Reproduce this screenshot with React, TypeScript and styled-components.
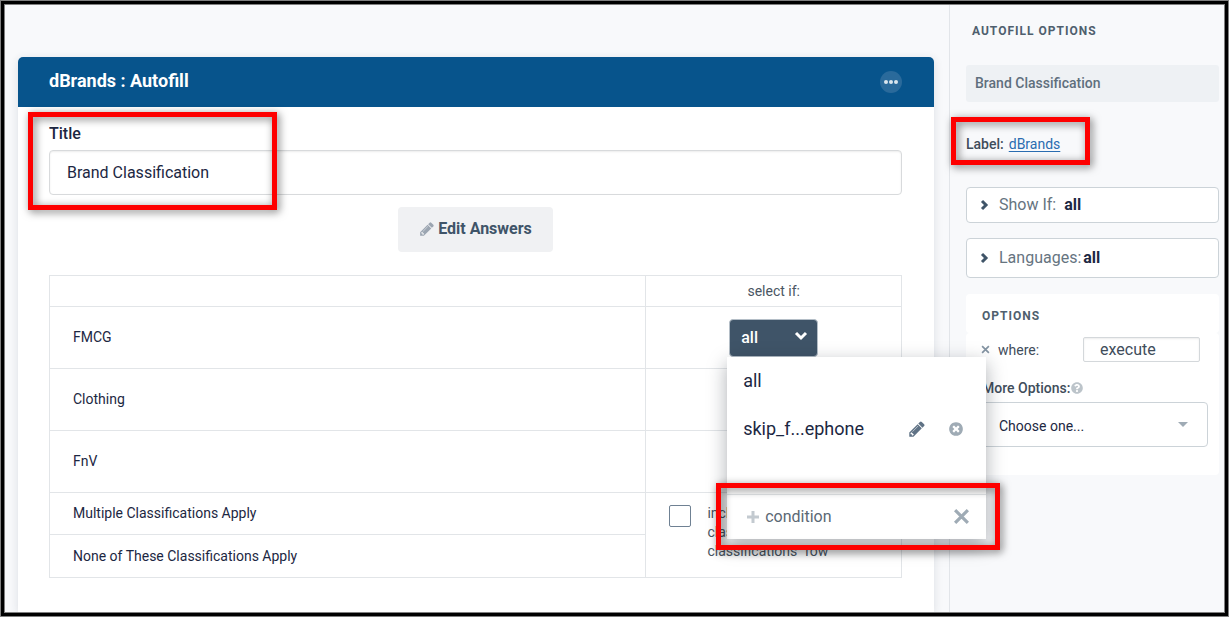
import React from "react";
import styled, { createGlobalStyle, css } from "styled-components";
import { FaQuestionCircle } from "react-icons/fa";

const GlobalStyle = createGlobalStyle`
  *, *::before, *::after { box-sizing: border-box; }
  body {
    margin: 0;
    font-family: Roboto, "Liberation Sans", sans-serif;
    font-size: 14px;
    line-height: 20px;
    color: #1c2742;
    background: #f8f9fb;
  }
  button, input, select { font: inherit; color: inherit; }
  button { cursor: pointer; }
`;

const Frame = styled.div`
  display: flex;
  min-height: 100vh;
  border: 1px solid #808080;
`;

const FrameLine = styled.div`
  flex: 1;
  display: flex;
  border: 3px solid #000;
`;

const Page = styled.div`
  flex: 1;
  display: grid;
  grid-template-columns: minmax(0, 1fr) 275px;
  border: 1px solid #808080;
  overflow: hidden;
`;

const Main = styled.main`
  position: relative;
  z-index: 1;
  display: flex;
  padding: 52px 15px 0 13px;
`;

const Card = styled.section`
  flex: 1;
  min-width: 0;
  border-radius: 5px 5px 0 0;
  background: #fff;
  box-shadow: 0 2px 10px rgba(40, 60, 80, 0.14);
`;

const CardHeader = styled.header`
  display: flex;
  align-items: center;
  justify-content: space-between;
  height: 50px;
  padding: 0 32px 0 31px;
  border-radius: 5px 5px 0 0;
  background: #07548c;
  color: #fff;
`;

const CardTitle = styled.h1`
  margin: 0;
  padding-bottom: 2px;
  font-size: 18px;
  line-height: 24px;
  font-weight: 700;
`;

const MoreButton = styled.button`
  display: flex;
  align-items: center;
  justify-content: center;
  width: 22px;
  height: 22px;
  padding: 0;
  border: 0;
  border-radius: 50%;
  background: #2a6a9b;
  color: #dbe6ee;
`;

const CardBody = styled.div`
  padding: 17px 32px 0 31px;
`;

const Highlight = styled.div<{ $inset: string }>`
  position: absolute;
  inset: ${(p) => p.$inset};
  z-index: 3;
  border: 5px solid #fe0000;
  filter: drop-shadow(2px 2px 4px rgba(0, 0, 0, 0.55));
  pointer-events: none;
`;

const Field = styled.div`
  position: relative;
  display: flex;
  flex-direction: column;
  gap: 6px;
`;

const FieldMark = styled(Highlight)`
  width: 249px;
`;

const FieldLabel = styled.label`
  font-size: 16px;
  font-weight: 500;
`;

const TitleInput = styled.input`
  width: 100%;
  height: 45px;
  padding: 0 17px;
  border: 1px solid #d8dadc;
  border-radius: 4px;
  background: #fff;
  box-shadow: inset 0 1px 2px rgba(0, 0, 0, 0.08);
  font-size: 16px;
`;

const EditButton = styled.button`
  display: flex;
  align-items: center;
  justify-content: center;
  gap: 3px;
  width: 155px;
  height: 45px;
  margin: 12px auto 23px;
  padding: 0 0 2px;
  border: 0;
  border-radius: 4px;
  background: #f0f1f3;
  color: #3f5468;
  font-size: 16px;
  font-weight: 700;

  svg { color: #9ba5b1; }
`;

const AnswerTable = styled.table`
  width: 100%;
  border-collapse: collapse;
  table-layout: fixed;
`;

const Cell = styled.td`
  height: 62px;
  padding: 0 23px 2px;
  border: 1px solid #e2e5e8;
`;

const SlimCell = styled(Cell)`
  height: 42px;
`;

const LastCell = styled(Cell)`
  height: 43px;
  padding-bottom: 0;
`;

const DropCell = styled(Cell)`
  padding: 0;
`;

const HeadCell = styled.th<{ $width?: string }>`
  width: ${(p) => p.$width ?? "auto"};
  height: 31px;
  padding: 0;
  border: 1px solid #e2e5e8;
  color: #4a5663;
  font-weight: 400;
`;

const DropHolder = styled.div`
  position: relative;
  width: 89px;
  margin: 0 auto;
`;

const DropButton = styled.button`
  display: flex;
  align-items: center;
  justify-content: space-between;
  width: 100%;
  height: 38px;
  padding: 0 9px 0 11px;
  border: 1px solid #b4bec7;
  border-radius: 4px;
  background: #3f5468;
  color: #fff;
  font-size: 16px;
  font-weight: 500;

  svg { margin-bottom: 4px; }
`;

const Menu = styled.div`
  position: absolute;
  top: 38px;
  left: -2px;
  z-index: 2;
  width: 259px;
  background: #fff;
  box-shadow: 0 6px 18px rgba(20, 30, 40, 0.35);
  font-size: 18px;
`;

const MenuRow = styled.div`
  display: flex;
  align-items: center;
  height: 48px;
  padding: 0 22px 0 16px;
`;

const MenuFooter = styled(MenuRow)`
  position: relative;
  height: 45px;
  margin-top: 41px;
  padding: 0 16px 0 20px;
  border-top: 1px solid #e2e5e8;
  color: #5b6874;
`;

const PlainButton = styled.button<{ $push?: boolean; $color?: string }>`
  display: flex;
  align-items: center;
  gap: 6px;
  padding: 0;
  border: 0;
  background: none;
  color: ${(p) => p.$color ?? "inherit"};
  ${(p) => p.$push && css`margin-left: auto;`}
`;

const ConditionButton = styled(PlainButton)`
  font-size: 16px;

  svg { color: #c3cad0; }
`;

const RowTools = styled.div`
  display: flex;
  align-items: center;
  gap: 22px;
  margin-left: auto;
`;

const IncludeLabel = styled.label`
  display: flex;
  gap: 16px;
  height: 61px;
  color: #4a5663;
  line-height: 19px;
`;

const IncludeText = styled.span`
  white-space: pre-line;
`;

const CheckBox = styled.input`
  appearance: none;
  flex: none;
  width: 22px;
  height: 22px;
  margin: 1px 0 0;
  border: 1px solid #6f8193;
  border-radius: 2px;
  background: #fff;
`;

const Aside = styled.aside`
  padding: 16px 5px 0 16px;
  border-left: 1px solid #e2e5e9;
  background: #f8f9fb;
`;

const AsideTop = styled.div`
  padding-left: 6px;
`;

const SideHeading = styled.h2`
  margin: 0;
  font-size: 12px;
  line-height: 20px;
  font-weight: 700;
  letter-spacing: 1px;
  color: #4f5f6e;
`;

const NameBox = styled.div`
  margin-top: 24px;
  padding: 8px 9px 9px;
  border-radius: 3px;
  background: #eef1f4;
  color: #5f6f7d;
  font-weight: 500;
`;

const LabelLine = styled.div`
  position: relative;
  margin: 32px 0 33px;
  color: #3f4d5b;
  font-weight: 500;

  a {
    margin-left: 5px;
    color: #2a6cb0;
    font-weight: 400;
    text-underline-offset: 2px;
  }
`;

const LabelMark = styled(Highlight)`
  width: 139px;
`;

const Accordion = styled.button<{ $height: number; $gap: number }>`
  display: flex;
  align-items: center;
  width: 100%;
  height: ${(p) => p.$height}px;
  margin-bottom: 15px;
  padding: 0 11px;
  border: 1px solid #ccd3d8;
  border-radius: 4px;
  background: #fff;
  color: #66747f;
  font-size: 16px;

  svg { margin-right: 7px; color: #3f5468; }
  strong { margin-left: ${(p) => p.$gap}px; color: #1c2742; }
`;

const OptionsPanel = styled.section`
  padding-top: 1px;
`;

const OptionsHead = styled.div`
  padding: 12px 16px 7px;
  border-radius: 4px;
  background: #fff;
`;

const OptionsBody = styled.div`
  padding: 4px 11px 28px;
  border-radius: 4px;
  background: #fff;
  color: #3f4d5b;
`;

const OptionRow = styled.div`
  display: flex;
  align-items: center;
  padding: 0 8px 0 4px;
`;

const WhereLabel = styled.label`
  margin-left: 8px;
`;

const WhereInput = styled.input`
  width: 117px;
  height: 25px;
  margin-left: auto;
  padding: 0 16px;
  border: 1px solid #d4d8db;
  border-radius: 2px;
  background: #fff;
  box-shadow: inset 0 1px 2px rgba(0, 0, 0, 0.08);
  font-size: 16px;
`;

const MoreOptions = styled.div`
  display: flex;
  align-items: center;
  gap: 1px;
  margin: 16px 0 4px;
  padding-left: 5px;
  font-weight: 500;

  svg { color: #bcc4ca; }
`;

const SelectWrap = styled.div`
  position: relative;
  display: flex;
  align-items: center;

  svg {
    position: absolute;
    right: 20px;
    color: #9fabb5;
    pointer-events: none;
  }
`;

const ChooseSelect = styled.select`
  appearance: none;
  width: 100%;
  height: 45px;
  padding: 2px 21px 0;
  border: 1px solid #ccd3d8;
  border-radius: 4px;
  background: #fff;
  color: #1c2742;
`;

const Pencil = ({ size }: { size: number }) => (
  <svg width={size} height={size} viewBox="0 0 1792 1792" fill="currentColor" aria-hidden="true">
    <path d="M491 1536l91-91-235-235-91 91v107h128v128h107zm523-928q0-22-22-22-10 0-17 7l-542 542q-7 7-7 17 0 22 22 22 10 0 17-7l542-542q7-7 7-17zm-54-192l416 416-832 832h-416v-416l832-832zm683 96q0 53-37 90l-166 166-416-416 166-165q36-38 90-38 53 0 91 38l235 234q37 39 37 91z" />
  </svg>
);

const TimesCircle = () => (
  <svg width="16" height="16" viewBox="0 0 1792 1792" fill="currentColor" aria-hidden="true">
    <path d="M1277 1122q0-26-19-45l-181-181 181-181q19-19 19-45 0-27-19-46l-90-90q-19-19-46-19-26 0-45 19l-181 181-181-181q-19-19-45-19-27 0-46 19l-90 90q-19 19-19 46 0 26 19 45l181 181-181 181q-19 19-19 45 0 27 19 46l90 90q19 19 46 19 26 0 45-19l181-181 181 181q19 19 45 19 27 0 46-19l90-90q19-19 19-46zm387-226q0 209-103 385.5t-279.5 279.5-385.5 103-385.5-103-279.5-279.5-103-385.5 103-385.5 279.5-279.5 385.5-103 385.5 103 279.5 279.5 103 385.5z" />
  </svg>
);

const Cross = ({ size, weight }: { size: number; weight: number }) => (
  <svg width={size} height={size} viewBox="0 0 16 16" fill="none" stroke="currentColor" strokeWidth={weight} aria-hidden="true">
    <path d="M2 2l12 12M14 2L2 14" />
  </svg>
);

const Chevron = ({ down }: { down?: boolean }) => (
  <svg width="14" height="14" viewBox="0 0 14 14" fill="none" stroke="currentColor" strokeWidth="3" aria-hidden="true">
    <path d={down ? "M2 4l5 5 5-5" : "M4 3l4 4-4 4"} />
  </svg>
);

export default function App() {
  return (
    <>
      <GlobalStyle />
      <Frame>
        <FrameLine>
          <Page>
            <Main>
              <Card>
                <CardHeader>
                  <CardTitle>dBrands : Autofill</CardTitle>
                  <MoreButton type="button" aria-label="More">
                    <svg width="14" height="4" viewBox="0 0 14 4" fill="currentColor" aria-hidden="true">
                      <circle cx="2" cy="2" r="2" />
                      <circle cx="7" cy="2" r="2" />
                      <circle cx="12" cy="2" r="2" />
                    </svg>
                  </MoreButton>
                </CardHeader>
                <CardBody>
                  <Field>
                    <FieldLabel htmlFor="title">Title</FieldLabel>
                    <TitleInput id="title" defaultValue="Brand Classification" />
                    <FieldMark $inset="-12px auto -15px -21px" />
                  </Field>
                  <EditButton type="button">
                    <Pencil size={16} />
                    Edit Answers
                  </EditButton>
                  <AnswerTable>
                    <thead>
                      <tr>
                        <HeadCell />
                        <HeadCell $width="30%">select if:</HeadCell>
                      </tr>
                    </thead>
                    <tbody>
                      <tr>
                        <Cell>FMCG</Cell>
                        <DropCell>
                          <DropHolder>
                            <DropButton type="button" aria-haspopup="true" aria-expanded="true">
                              all
                              <Chevron down />
                            </DropButton>
                            <Menu>
                              <MenuRow>
                                <PlainButton type="button">all</PlainButton>
                              </MenuRow>
                              <MenuRow>
                                <PlainButton type="button">skip_f...ephone</PlainButton>
                                <RowTools>
                                  <PlainButton type="button" $color="#5f7285" aria-label="Edit">
                                    <Pencil size={18} />
                                  </PlainButton>
                                  <PlainButton type="button" $color="#9fabb5" aria-label="Remove">
                                    <TimesCircle />
                                  </PlainButton>
                                </RowTools>
                              </MenuRow>
                              <MenuFooter>
                                <ConditionButton type="button">
                                  <svg width="12" height="12" viewBox="0 0 12 12" stroke="currentColor" strokeWidth="3" aria-hidden="true">
                                    <path d="M6 0v12M0 6h12" />
                                  </svg>
                                  condition
                                </ConditionButton>
                                <PlainButton type="button" $push $color="#9fabb5" aria-label="Close">
                                  <Cross size={17} weight={3} />
                                </PlainButton>
                                <Highlight $inset="-12px -14px -11px -11px" />
                              </MenuFooter>
                            </Menu>
                          </DropHolder>
                        </DropCell>
                      </tr>
                      <tr>
                        <Cell>Clothing</Cell>
                        <Cell />
                      </tr>
                      <tr>
                        <Cell>FnV</Cell>
                        <Cell />
                      </tr>
                      <tr>
                        <SlimCell>Multiple Classifications Apply</SlimCell>
                        <SlimCell rowSpan={2}>
                          <IncludeLabel>
                            <CheckBox type="checkbox" />
                            <IncludeText>
                              {'include "multiple\nclassifications" and "no\nclassifications" row'}
                            </IncludeText>
                          </IncludeLabel>
                        </SlimCell>
                      </tr>
                      <tr>
                        <LastCell>None of These Classifications Apply</LastCell>
                      </tr>
                    </tbody>
                  </AnswerTable>
                </CardBody>
              </Card>
            </Main>
            <Aside>
              <AsideTop>
                <SideHeading>AUTOFILL OPTIONS</SideHeading>
              </AsideTop>
              <NameBox>Brand Classification</NameBox>
              <LabelLine>
                Label:
                <a href="#dBrands">dBrands</a>
                <LabelMark $inset="-17px auto -11px -15px" />
              </LabelLine>
              <Accordion type="button" $height={36} $gap={8}>
                <Chevron />
                Show If:
                <strong>all</strong>
              </Accordion>
              <Accordion type="button" $height={40} $gap={2}>
                <Chevron />
                Languages:
                <strong>all</strong>
              </Accordion>
              <OptionsPanel>
                <OptionsHead>
                  <SideHeading>OPTIONS</SideHeading>
                </OptionsHead>
                <OptionsBody>
                  <OptionRow>
                    <PlainButton type="button" $color="#8494a3" aria-label="Remove where">
                      <Cross size={9} weight={3} />
                    </PlainButton>
                    <WhereLabel htmlFor="where">where:</WhereLabel>
                    <WhereInput id="where" defaultValue="execute" />
                  </OptionRow>
                  <MoreOptions>
                    <label htmlFor="more">More Options:</label>
                    <FaQuestionCircle size={12} />
                  </MoreOptions>
                  <SelectWrap>
                    <ChooseSelect id="more">
                      <option>Choose one...</option>
                    </ChooseSelect>
                    <svg width="10" height="5" viewBox="0 0 10 5" fill="currentColor" aria-hidden="true">
                      <path d="M0 0h10L5 5z" />
                    </svg>
                  </SelectWrap>
                </OptionsBody>
              </OptionsPanel>
            </Aside>
          </Page>
        </FrameLine>
      </Frame>
    </>
  );
}
